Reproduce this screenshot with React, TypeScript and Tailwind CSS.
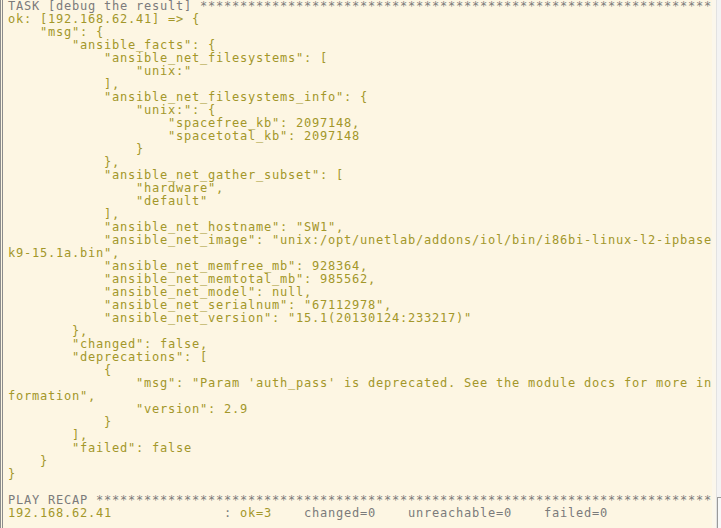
import React from "react";

const OLIVE = "text-[#a3972a]";
const GRAY = "text-[#7b7b7b]";

type Seg = { t: string; gray?: boolean };

const json: string[] = [
  'ok: [192.168.62.41] => {',
  '    "msg": {',
  '        "ansible_facts": {',
  '            "ansible_net_filesystems": [',
  '                "unix:"',
  '            ],',
  '            "ansible_net_filesystems_info": {',
  '                "unix:": {',
  '                    "spacefree_kb": 2097148,',
  '                    "spacetotal_kb": 2097148',
  '                }',
  '            },',
  '            "ansible_net_gather_subset": [',
  '                "hardware",',
  '                "default"',
  '            ],',
  '            "ansible_net_hostname": "SW1",',
  '            "ansible_net_image": "unix:/opt/unetlab/addons/iol/bin/i86bi-linux-l2-ipbase',
  'k9-15.1a.bin",',
  '            "ansible_net_memfree_mb": 928364,',
  '            "ansible_net_memtotal_mb": 985562,',
  '            "ansible_net_model": null,',
  '            "ansible_net_serialnum": "67112978",',
  '            "ansible_net_version": "15.1(20130124:233217)"',
  '        },',
  '        "changed": false,',
  '        "deprecations": [',
  '            {',
  '                "msg": "Param \'auth_pass\' is deprecated. See the module docs for more in',
  'formation",',
  '                "version": 2.9',
  '            }',
  '        ],',
  '        "failed": false',
  '    }',
  '}',
];

const lines: Seg[][] = [
  [{ t: "TASK [debug the result] " + "*".repeat(64), gray: true }],
  ...json.map((t) => [{ t }]),
  [{ t: "" }],
  [{ t: "PLAY RECAP " + "*".repeat(77), gray: true }],
  [
    { t: "192.168.62.41" + " ".repeat(14) },
    { t: ": ", gray: true },
    { t: "ok=3" },
    { t: "    changed=0    unreachable=0    failed=0", gray: true },
  ],
];

export default function App() {
  return (
    <div className="w-[721px] h-[528px] flex overflow-hidden bg-[#fdf6e3]">
      <div className="flex-1 border-l-[3px] border-double border-[#8c8c8c] pl-[5px] font-['DejaVu_Sans_Mono',monospace] text-[12px] tracking-[0.776px] leading-[13px]">
        {lines.map((segs, i) => (
          <div key={i} className="h-[13px] whitespace-pre">
            {segs.map((s, j) => (
              <span key={j} className={s.gray ? GRAY : OLIVE}>
                {s.t}
              </span>
            ))}
          </div>
        ))}
      </div>
      <div className="w-[4px] bg-[#fbf7ec]" />
      <div className="w-[5px] flex flex-col border-l border-[#e2e2e2] bg-[#f3f3f3]">
        <div className="flex-1" />
        <div className="h-[31px] border-t border-l border-[#9a9a9a] bg-[#f8f8f8]" />
      </div>
    </div>
  );
}
